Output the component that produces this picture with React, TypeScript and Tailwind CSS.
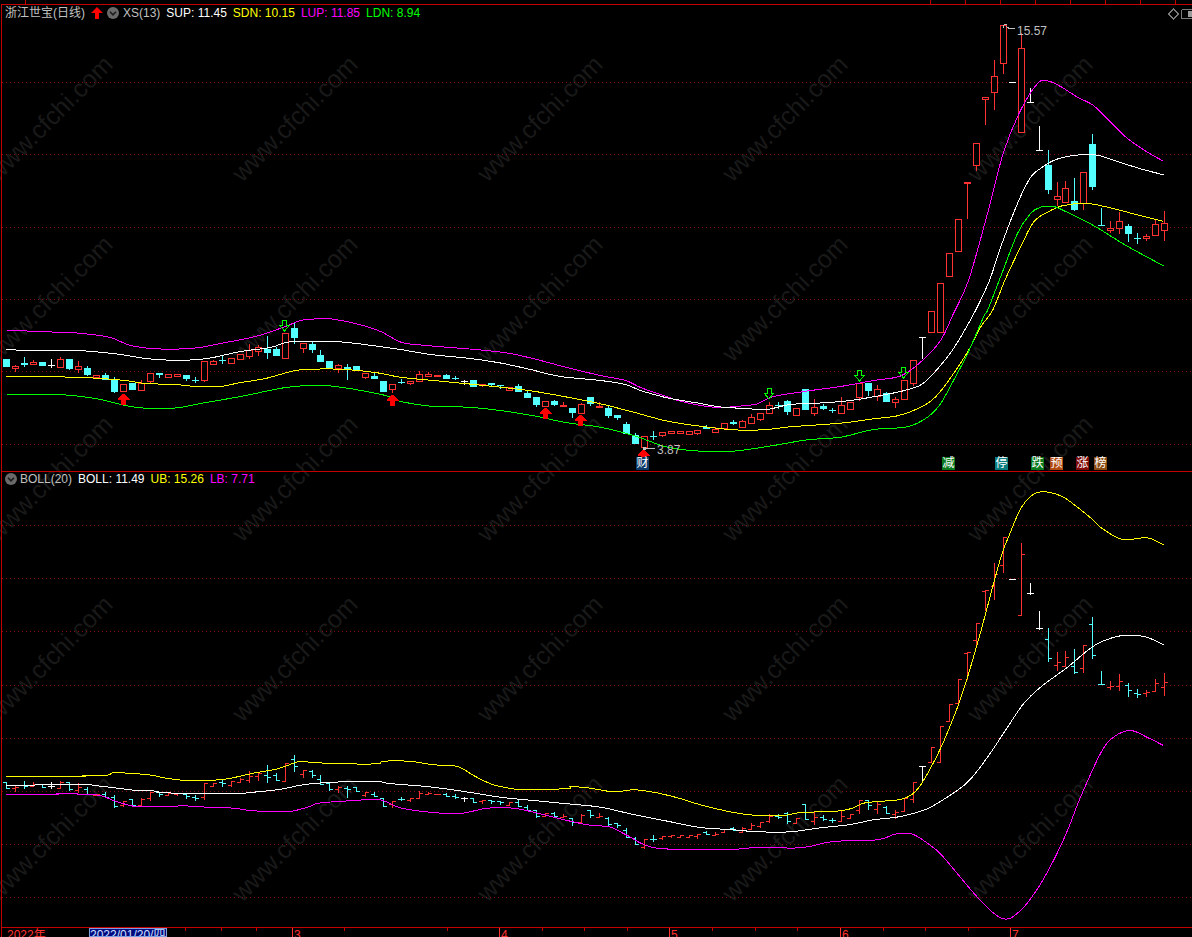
import React from "react";

type C = [string, number, number, number?, number?];
const XA = 6.33, XS = 8.976;
const cx = (i: number) => Math.round(XA + XS * i) + 0.5;

const candles: C[] = [
["c",359,367],["r",365.7,367.7,365,371.7],["c",363,365,357,366.7],["r",362.3,364.3,359.5,365],["c",361.7,365.7],
["w",365,366,359,367.7],["r",359,366.7,357,366.7],["c",359,369,359,369.7],["r",366,369.3,361,372.7],["c",368,374.7,366,375.7],
["r",375,377],["c",375,379.7,373.3,379.7],["c",379.3,392,377,393],["r",384.3,391,384.3,392],["c",382.7,390],
["r",382.7,389.7,380.3,390],["r",373.3,380.7,373.3,383],["c",373,374.7,373,377.7],["r",374.3,376.7],["r",374,375.7,374,377.3],
["c",375,378.7,375,380.7],["c",380,380.7,377,383],["r",361,379.7,361,381.7],["r",361,364.3,360,364.3],["c",359.5,360.3,355.3,364],
["r",358.3,362.7,358.3,364.3],["r",354.3,359.3,353.7,359.3],["r",350.3,355.7,344,359],["r",347.3,351.3,345,355.7],["c",349.3,352.7,336,359],
["c",349.3,355.7,347.3,356.3],["r",333.3,358.3],["c",328,337.7,322,343.7],["r",342.7,347.7,342.7,352.7],["c",344,350,342.3,352.7],
["c",355,361.7,350,361.7],["c",361,368.3,361,369.3],["r",365.3,368,364.3,373],["c",367.3,369,364,379.7],["c",366.3,370.7],
["r",373.3,376.7,373.3,378.7],["c",376,378.7,373.3,378.7],["c",381.3,392],["r",384.3,389.3,384.3,393],["c",381.5,382.3,379.3,384],
["r",381.3,383.3,381.3,385],["r",374.3,380.7,371,380.7],["r",374,375.7,372,375.7],["r",375,375.7],["c",374.7,378.7,373.7,378.7],
["c",378.3,379,375.7,380.3],["w",381,381.8,379.7,384.7],["c",380.3,386.7],["r",383.7,384.7,383.7,387],["c",383,385.3,383,387],
["c",385.3,386.3,385.3,388.7],["r",386.7,389.7],["c",385.7,391.7,384,391.7],["c",393,397.7,391,397.7],["c",397.3,405,397.3,406.7],
["r",401.3,405.7],["c",401,405,399.7,406],["r",405.3,406,402.3,406],["c",408.3,413,408.3,417.7],["r",404.3,413.3,403,413.3],
["c",397.3,404,397.3,406],["r",405.7,407.3,401.7,407.3],["c",408,416,406.3,417.7],["c",415.3,417.7,415.3,419.7],["c",424.3,434.3,422.3,434.3],
["c",435.3,443.7,433.3,443.7],["r",436.3,447.3,436.3,449],["c",436.3,437.3,431,439.7],["r",432.3,435.3,432.3,436.7],["r",430.7,433,430.7,434],
["r",431.3,433.3],["r",430.7,433.7],["r",429.7,432.7,429.7,435.3],["c",427.3,429.3,425.3,429.3],["r",429.3,431.7,427.3,431.7],
["r",423.3,427.7],["c",421.7,424,420.3,425],["r",421.3,426.7,420.3,426.7],["r",417.3,423,414.3,423],["r",413.3,419.3,413.3,420.7],
["r",404.7,412.7,402.3,413.7],["c",405,406,402.3,408.7],["c",401,412,399.7,414.7],["r",408.3,415.3],["c",389.3,409.7],
["r",406.7,412.7,399.3,415.7],["c",406,409,403.7,410.3],["c",410.3,411,408.3,413],["r",405.3,412.7,397.3,412.7],["r",402.3,408.7],
["r",383.3,397,383.3,400.7],["c",383.3,391,383.3,396],["r",389.3,396,385,400.7],["c",393.3,401.7,392,401.7],["r",399.3,402.3,397.3,407.7],
["r",380.3,398.7],["r",359.7,382.7,359.7,385.7],["w",337.3,338.3,337.3,358.7],["r",311,331.7],["r",283,331.7],
["r",253.3,275.7],["r",219.3,251.3],["r",182.3,183.3,182.3,218.7],["r",142.7,165.3,142.7,171],["r",97.3,99.3,97.3,125],
["r",76.3,92.3,60.3,109.7],["r",25.3,63.3,25.3,73.7],["w",82,83],["r",48.3,132.3,33.3,132.3],["w",102,103,88,103],
["w",150,151,126,151],["c",165,189.7,150,193.7],["r",196.3,199.3,182,206],["r",188.3,201.7,181,201.7],["c",201.3,209.7,178,210.7],
["r",172.3,203.3,172.3,209.7],["c",144.3,186.7,134,189.7],["c",225,226,208.3,226],["r",228.3,230.3,221,233],["r",221.3,228.3,212,233.7],
["c",226.3,233.7,224.3,241.7],["c",238,238.8,233,243.7],["r",236,238,234.3,241.3],["r",224.3,235.3,219.3,235.3],["r",223.3,230.3,211,240.7],
];

const P = (a: number[]) => a.reduce<[number, number][]>((o, v, i) => { if (i % 2 === 0) o.push([v, a[i + 1]]); return o; }, []);

const path = (pts: [number, number][]) => {
  let d = `M${pts[0][0]} ${pts[0][1]}`;
  for (let i = 0; i < pts.length - 1; i++) {
    const p0 = pts[Math.max(0, i - 1)], p1 = pts[i], p2 = pts[i + 1], p3 = pts[Math.min(pts.length - 1, i + 2)];
    const c1x = p1[0] + (p2[0] - p0[0]) / 6, c1y = p1[1] + (p2[1] - p0[1]) / 6;
    const c2x = p2[0] - (p3[0] - p1[0]) / 6, c2y = p2[1] - (p3[1] - p1[1]) / 6;
    d += `C${c1x.toFixed(1)} ${c1y.toFixed(1)} ${c2x.toFixed(1)} ${c2y.toFixed(1)} ${p2[0]} ${p2[1]}`;
  }
  return d;
};

const topLines: [string, number[]][] = [
["#ff00ff",[6,329.5,38,331,65,332,82,333,110,337,130,345,160,348.5,195,347.5,225,342,255,336,285,326,300,320,318,318.3,330,318.3,355,323,380,331,400,341.5,420,344.5,450,347,480,349.5,510,353,540,360,570,368,600,375,625,380,640,387,660,394,680,400.7,700,405,720,407,745,405,757,403.3,773,396,807,390.5,840,386,873,380,900,375.5,920,361.7,940,340,953,313,968,280,987,213,1003,152,1020,110,1037,83,1047,80.3,1060,86,1077,96.7,1093,105,1110,121.7,1127,138,1147,151.7,1163,160.7]],
["#ffffff",[6,349.3,40,350,73,350,92,351,120,354,145,358,165,359.5,190,359.5,210,357.5,240,351,270,347,285,342,300,341,316,340.5,335,341,360,343.5,400,349,430,354,470,358,500,362.5,530,369,560,376,600,380,625,384,640,390,665,397,700,403,720,406.5,745,408,766,409,790,404,820,402.5,850,400,880,395,900,391,917,386,925,381,940,365,955,345,975,310,989,280,1000,247,1017,203,1030,177,1040,168,1053,160,1067,156,1080,154.3,1097,154.7,1117,161,1140,168.3,1163,174.3]],
["#ffff00",[6,376.3,65,376.5,92,377.5,125,380,145,383,175,384,195,386,220,386,240,382,265,378,295,370,320,368.5,345,369,375,372,400,376.7,433,380,467,383.3,500,386.7,533,390.7,567,396.7,600,403.3,633,411.7,667,420.7,700,425.7,733,429.3,763,429.3,790,426.3,840,422.7,873,418.3,897,415.3,917,408.3,933,398.3,947,381.7,967,351.7,980,326.7,992,310,1005,278.3,1020,246.7,1033,221.7,1047,211.7,1063,205,1087,203,1107,206.7,1133,213.3,1163,221]],
["#00ff00",[6,393.5,30,394,65,394.5,95,398,125,405,145,407.7,175,407.5,200,403,240,396,285,387,310,385,330,385.5,355,389,385,395,400,401,433,406,467,406.7,500,410,533,415.3,567,422.3,600,426.7,633,435,667,446.7,700,450.7,733,450.7,773,445,807,439.3,840,436.7,873,429,907,426.3,927,416.7,940,403.3,953,380,967,353.3,983,316.7,987,310,1000,276.7,1017,233,1030,213,1040,206.7,1053,206,1063,210,1093,225,1120,241.7,1140,253,1163,265.3]],
];

const botLines: [string, number[]][] = [
["#ffff00",[6,776,80,776,83,775,107,774.7,113,772.3,137,773.3,153,775,167,778,190,780.3,207,780,227,778.3,253,772.7,277,768.3,293,762.7,300,761,317,762.3,343,763.3,377,763.3,382,761,400,760.3,417,761.7,433,764.3,457,766,473,775,490,783.3,500,786,523,789.3,567,788,570,786.3,587,787.3,613,791.3,633,789.3,653,791.7,677,797.3,700,804.3,733,812,757,815,783,815,800,812,833,811,850,808.3,863,802.7,877,801,900,799,913,792.7,923,780,940,748,957,706.7,967,676.7,980,632,1000,558,1010,531.7,1020,508.3,1030,496,1038,491.7,1050,492,1063,496.7,1077,506.7,1090,517.3,1100,526.7,1117,537.3,1127,539.3,1147,537.3,1163,544.3]],
["#ffffff",[6,785,80,784,100,785.7,117,787.7,137,790,157,790.7,163,792.3,233,793,253,791.7,280,788.7,300,784.7,317,782.7,343,781.3,378,781.3,387,782.7,400,784,423,785.7,457,790,500,796.7,533,800,567,803.3,600,806.7,633,814,667,820.7,700,827,733,829.3,757,831.3,790,831.3,820,827.3,850,824,873,819.3,900,816,925,809,943,799,967,781.7,987,756.7,1007,726.7,1023,703.3,1040,686.7,1067,666.7,1087,650,1100,641.7,1120,635.3,1140,635.3,1153,639.3,1163,644.3]],
["#ff00ff",[6,794,55,794,57,793.3,83,793.7,100,795,113,800,133,805.7,153,806.3,170,806.3,182,805.3,207,806.7,233,807.7,253,810.3,287,811.3,307,806.7,318,802.7,343,800.7,377,799,390,803.3,400,807.3,423,811,457,813.3,487,807.7,513,807.7,533,811.7,557,817.7,587,824.3,610,826.7,627,835,657,847.7,733,848.7,757,846.7,800,847.3,833,841,877,839.3,893,834,900,833.3,913,834,930,845,943,856.7,980,900,1003,918.3,1020,910,1037,888.3,1053,860,1067,830,1080,796.7,1100,753,1113,736.7,1130,730,1147,737,1163,745]],
];

const RED = "#ff3232", CYAN = "#54ffff", WHITE = "#ffffff";
const color = (c: string) => (c === "r" ? RED : c === "c" ? CYAN : WHITE);

const Candle = ({ c, i }: { c: C; i: number }) => {
  const x = cx(i);
  const [k, t, b, h = t, l = b] = c;
  const col = color(k);
  const rt = Math.round(t), rb = Math.max(Math.round(b), rt + 1);
  return (
    <g>
      <line x1={x} x2={x} y1={Math.round(h)} y2={Math.round(l)} stroke={col} />
      {k === "r" ? (
        <rect x={x - 3} y={rt + 0.5} width={6} height={Math.max(1, rb - rt)} fill="#000" stroke={col} />
      ) : (
        <rect x={x - 3.5} y={rt} width={7} height={rb - rt} fill={col} />
      )}
    </g>
  );
};

const by = (y: number) => Math.round(518.3 + 0.7345 * y) + 0.5;
const Bar = ({ c, i }: { c: C; i: number }) => {
  const x = cx(i);
  const [k, t, b, h = t, l = b] = c;
  const col = color(k);
  const open = k === "r" ? by(b) : by(t);
  const close = k === "r" ? by(t) : by(b);
  const flat = k === "w";
  return (
    <g stroke={col}>
      <line x1={x} x2={x} y1={by(h) - 0.5} y2={by(l) + 0.5} />
      <line x1={x - 3.5} x2={x} y1={flat ? by(t) : open} y2={flat ? by(t) : open} />
      <line x1={x} x2={x + 3.5} y1={flat ? by(t) : close} y2={flat ? by(t) : close} />
    </g>
  );
};

const RedArrow = ({ x, y }: { x: number; y: number }) => (
  <polygon points={`${x - 1},${y} ${x + 1},${y} ${x + 6},${y + 5} ${x + 6},${y + 6} ${x + 2.5},${y + 6} ${x + 2.5},${y + 11} ${x - 2.5},${y + 11} ${x - 2.5},${y + 6} ${x - 6},${y + 6} ${x - 6},${y + 5}`} fill="#ff0000" />
);
const GreenArrow = ({ x, y }: { x: number; y: number }) => (
  <polygon points={`${x - 1.5},${y + 0.5} ${x + 2.5},${y + 0.5} ${x + 2.5},${y + 5.5} ${x + 5},${y + 5.5} ${x + 0.5},${y + 11} ${x - 4},${y + 5.5} ${x - 1.5},${y + 5.5}`} fill="none" stroke="#00ff00" />
);

const Grid = ({ ys }: { ys: number[] }) => (
  <g stroke="#7c1010" strokeDasharray="1 3" shapeRendering="crispEdges">
    {ys.map((y) => <line key={y} x1={2} x2={1192} y1={y + 0.5} y2={y + 0.5} />)}
  </g>
);

const Curves = ({ lines }: { lines: [string, number[]][] }) => (
  <g fill="none" strokeWidth={1} transform="translate(0.5 0.5)">
    {lines.map(([c, a]) => <path key={c} d={path(P(a))} stroke={c} />)}
  </g>
);

const Chevron = () => (
  <svg width="12" height="12" viewBox="0 0 12 12" className="shrink-0">
    <circle cx="6" cy="6" r="6" fill="#6a6a6a" />
    <path d="M3 4.8 L6 7.8 L9 4.8" fill="none" stroke="#1c1c1c" strokeWidth="1.6" />
  </svg>
);

const Badge = ({ t, cls }: { t: string; cls: string }) => (
  <span className={`absolute top-[457px] flex h-[13px] w-[13px] items-center justify-center text-[12px] leading-[13px] text-white ${cls}`}>{t}</span>
);

const FONT = "[font-family:'Liberation_Sans','Noto_Sans_CJK_SC',sans-serif]";
const minor = [185, 221, 256, 344, 447, 542, 584, 627, 712, 755, 797, 883, 925, 968];
const topTicks = [25, 930, 965, 1000, 1035, 1070, 1105, 1140, 1175];

export default function App() {
  return (
    <div className={`relative h-[937px] w-[1192px] overflow-hidden bg-black text-[12px] leading-[14px] ${FONT}`}>
      <div className="absolute left-[-73px] top-[28px] grid grid-cols-[repeat(5,245px)] auto-rows-[180px]">
        {Array.from({ length: 25 }).map((_, i) => (
          <div key={i} className="flex items-center justify-center">
            <span className="-rotate-45 whitespace-nowrap text-[25px] leading-none text-[#191919]">www.cfchi.com</span>
          </div>
        ))}
      </div>

      <div className="relative flex h-full flex-col pl-px pt-[4px]">
        <div className="flex h-full flex-col border-l border-t border-[#c40000]">
          <svg viewBox="2 5 1190 466" className="block h-[466px] w-[1190px] shrink-0" shapeRendering="crispEdges">
            <Grid ys={[82, 154, 227, 299, 371, 444]} />
            {candles.map((c, i) => <Candle key={i} c={c} i={i} />)}
            <Curves lines={topLines} />
            <RedArrow x={123.5} y={394} />
            <RedArrow x={392.5} y={395} />
            <RedArrow x={545.5} y={408} />
            <RedArrow x={580.5} y={415} />
            <RedArrow x={643.5} y={450} />
            <GreenArrow x={284} y={320} />
            <GreenArrow x={768.5} y={388} />
            <GreenArrow x={859} y={370} />
            <GreenArrow x={903} y={367} />
            <line x1={645} x2={655} y1={448.5} y2={448.5} stroke="#c0c0c0" />
            <rect x={643} y={447} width={3} height={3} fill="#c0c0c0" />
            <path d="M1003.5 24.5h3M1003.5 24.5v3M1006 26l3 2.5h6" fill="none" stroke="#c0c0c0" />
          </svg>
          <svg viewBox="2 472 1190 455" className="block h-[456px] w-[1190px] shrink-0 border-t border-[#c40000]" shapeRendering="crispEdges">
            <Grid ys={[525, 578, 631, 685, 738, 791, 844, 897]} />
            {candles.map((c, i) => <Bar key={i} c={c} i={i} />)}
            <Curves lines={botLines} />
          </svg>
          <div className="relative flex h-[10px] flex-1 overflow-hidden whitespace-nowrap border-t border-[#c40000] text-[#ff3232]">
            <span className="w-[87px] pl-[5px]">2022年</span>
            <span className="w-[78px] overflow-hidden border border-[#7fa0e0] bg-[#000a80] leading-[12px] text-[#cfe0ff]">2022/01/20/四</span>
            <span className="w-[125px]" />
            <span className="w-[207px] border-l border-[#ff3232] pl-px">3</span>
            <span className="w-[170px] border-l border-[#ff3232] pl-px">4</span>
            <span className="w-[171px] border-l border-[#ff3232] pl-px">5</span>
            <span className="w-[170px] border-l border-[#ff3232] pl-px">6</span>
            <span className="flex-1 border-l border-[#ff3232] pl-px">7</span>
            <svg className="absolute left-0 top-0 h-[3px] w-[1190px]" viewBox="2 928 1190 3" shapeRendering="crispEdges">
              {minor.map((x) => <line key={x} x1={x + 0.5} x2={x + 0.5} y1={928} y2={931} stroke="#c40000" />)}
            </svg>
          </div>
        </div>
      </div>

      <svg className="absolute left-0 top-0 h-[4px] w-[1192px]" viewBox="0 0 1192 4" shapeRendering="crispEdges">
        {topTicks.map((x) => <line key={x} x1={x + 0.5} x2={x + 0.5} y1={0} y2={4} stroke="#c40000" />)}
      </svg>

      <div className="absolute left-[5px] top-[6px] flex h-[14px] items-center gap-[6px] whitespace-nowrap">
        <span className="text-[#c0c0c0]">浙江世宝(日线)</span>
        <div className="flex items-center gap-[4px]">
          <svg width="12" height="12" viewBox="0 0 12 12" className="shrink-0">
            <polygon points="6,0 12,6 8,6 8,12 4,12 4,6 0,6" fill="#ff0000" />
          </svg>
          <Chevron />
          <span className="text-[#c0c0c0]">XS(13)</span>
        </div>
        <span className="text-white">SUP: 11.45</span>
        <span className="text-[#ffff00]">SDN: 10.15</span>
        <span className="text-[#ff00ff]">LUP: 11.85</span>
        <span className="text-[#00ff00]">LDN: 8.94</span>
      </div>

      <div className="absolute left-[5px] top-[472px] flex h-[14px] items-center gap-[6px] whitespace-nowrap">
        <div className="flex items-center gap-[3px]">
          <Chevron />
          <span className="text-[#c0c0c0]">BOLL(20)</span>
        </div>
        <span className="text-white">BOLL: 11.49</span>
        <span className="text-[#ffff00]">UB: 15.26</span>
        <span className="text-[#ff00ff]">LB: 7.71</span>
      </div>

      <svg className="absolute right-0 top-[8px] h-[12px] w-[26px]" viewBox="0 0 26 12" shapeRendering="crispEdges">
        <path d="M2.5 6 L7.5 1 L12.5 6 L7.5 11 Z" fill="none" stroke="#7a7a7a" />
        <rect x="15.5" y="1.5" width="12" height="9" rx="1.5" fill="none" stroke="#7a7a7a" />
        <rect x="22" y="3" width="4" height="6" fill="#9a9a9a" />
      </svg>

      <span className="absolute left-[1017px] top-[24px] text-[#c0c0c0]">15.57</span>
      <span className="absolute left-[657px] top-[443px] text-[#c0c0c0]">3.87</span>
      <Badge t="财" cls="left-[636px] bg-[#0c3a68]" />
      <Badge t="减" cls="left-[942px] bg-[#0b7a1e]" />
      <Badge t="停" cls="left-[995px] bg-[#0a7c80]" />
      <Badge t="跌" cls="left-[1031px] bg-[#0b7a1e]" />
      <Badge t="预" cls="left-[1050px] bg-[#b04a10]" />
      <Badge t="涨" cls="left-[1076px] bg-[#800a0a]" />
      <Badge t="榜" cls="left-[1094px] bg-[#8a4a10]" />
    </div>
  );
}
